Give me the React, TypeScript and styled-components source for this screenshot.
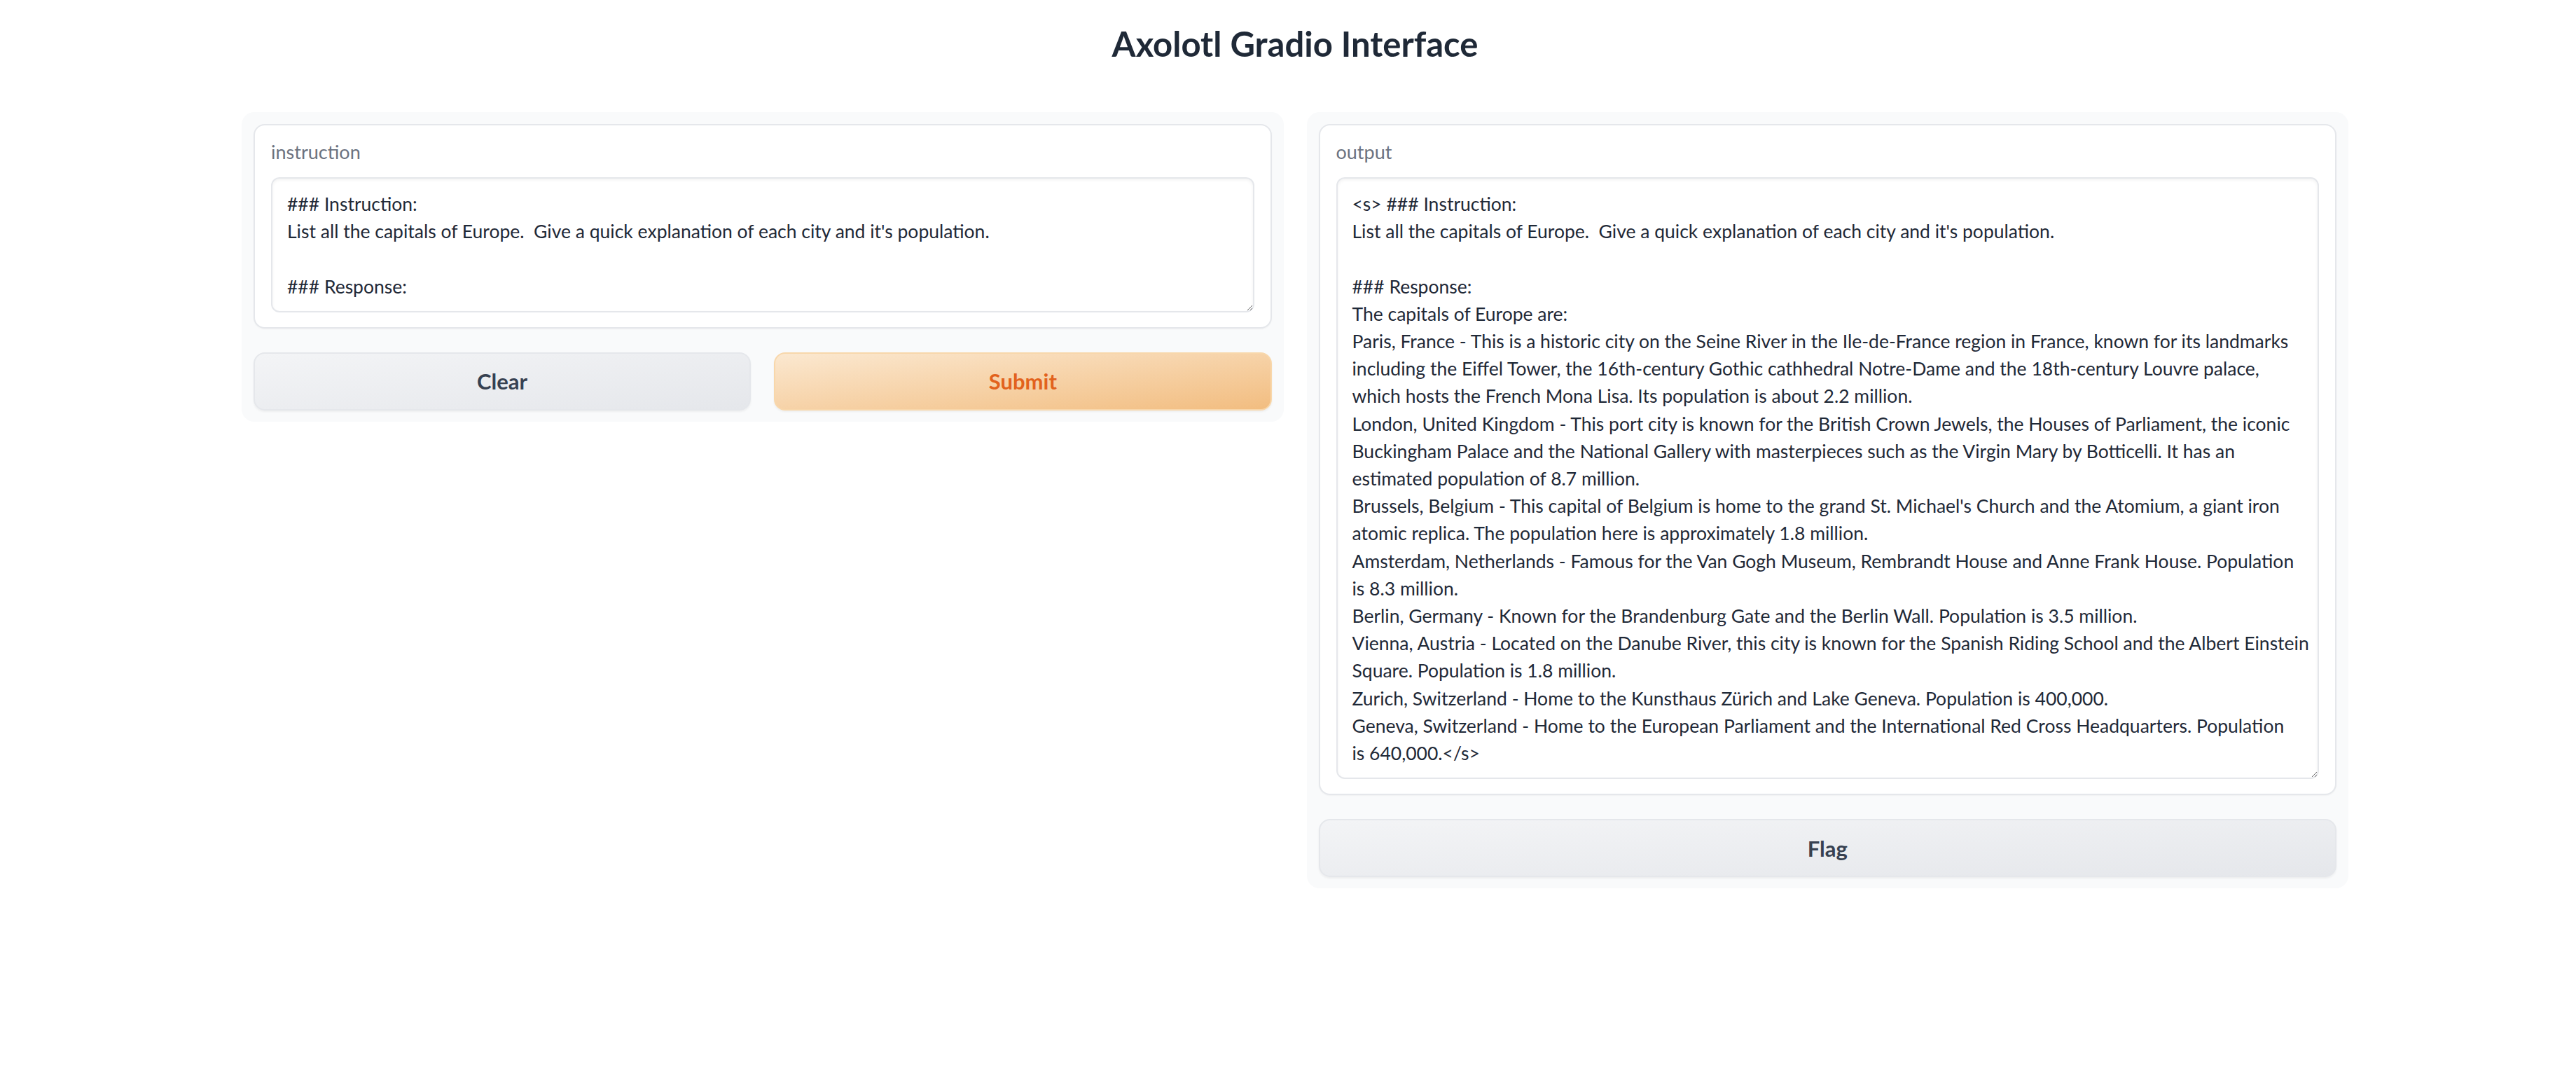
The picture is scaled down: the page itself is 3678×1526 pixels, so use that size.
import React from 'react';
import styled, {createGlobalStyle} from 'styled-components';

const GlobalStyle = createGlobalStyle`
  body {
    margin: 0;
    background: #fff;
    font-family: Lato, "Liberation Sans", sans-serif;
    color: #1f2937;
  }
`

const Page = styled.div`
  padding: 33px 0 60px 20px;
`

const Container = styled.div`
  width: 3008px;
  margin: 0 auto;
`

const Title = styled.h1`
  margin: 0 0 69px;
  text-align: center;
  font-size: 49px;
  line-height: 58px;
  font-weight: 700;
  color: #1f2937;
`

const Columns = styled.div`
  display: grid;
  grid-template-columns: 1fr 1fr;
  gap: 33px;
  align-items: start;
`

const Panel = styled.div`
  background: #f9fafb;
  border-radius: 18px;
  padding: 17px 17px 16px;
  display: flex;
  flex-direction: column;
  gap: 34px;
`

const Block = styled.div`
  background: #fff;
  border: 2px solid #e5e7eb;
  border-radius: 16px;
  padding: 18px 23px 21px;
  box-shadow: 0 1px 2px rgba(0, 0, 0, 0.04);
`

const Label = styled.span`
  display: block;
  font-size: 27px;
  line-height: 39px;
  color: #6b7280;
  margin-bottom: 17px;
`

const TextBox = styled.textarea<{$rows: number}>`
  display: block;
  width: 100%;
  box-sizing: border-box;
  height: ${p => p.$rows * 39.2 + 36}px;
  padding: 17px 21px 15px;
  border: 2px solid #e5e7eb;
  border-radius: 12px;
  box-shadow: inset 0 2px 4px rgba(0, 0, 0, 0.05);
  background: #fff;
  font-family: inherit;
  font-size: 26.5px;
  line-height: 39.2px;
  color: #1f2937;
  white-space: pre;
  overflow: hidden;
  resize: vertical;
  outline: none;
`

const ButtonRow = styled.div`
  display: grid;
  grid-template-columns: 1fr 1fr;
  gap: 33px;
`

const Button = styled.button<{$primary?: boolean}>`
  height: 83px;
  width: 100%;
  border-radius: 16px;
  font-family: inherit;
  font-size: 31px;
  font-weight: 700;
  cursor: pointer;
  box-shadow: 0 2px 3px rgba(0, 0, 0, 0.05);
  border: 2px solid ${p => (p.$primary ? '#f8d7ab' : '#e5e7eb')};
  color: ${p => (p.$primary ? '#e2621c' : '#374151')};
  background: ${p =>
    p.$primary
      ? 'linear-gradient(to bottom right, #fbe8d0, #f2bd80)'
      : 'linear-gradient(to bottom right, #f3f4f6, #e5e7eb)'};
`

const instruction = `### Instruction:
List all the capitals of Europe.  Give a quick explanation of each city and it's population.

### Response:`

const output = `<s> ### Instruction:
List all the capitals of Europe.  Give a quick explanation of each city and it's population.

### Response:
The capitals of Europe are:
Paris, France - This is a historic city on the Seine River in the Ile-de-France region in France, known for its landmarks
including the Eiffel Tower, the 16th-century Gothic cathhedral Notre-Dame and the 18th-century Louvre palace,
which hosts the French Mona Lisa. Its population is about 2.2 million.
London, United Kingdom - This port city is known for the British Crown Jewels, the Houses of Parliament, the iconic
Buckingham Palace and the National Gallery with masterpieces such as the Virgin Mary by Botticelli. It has an
estimated population of 8.7 million.
Brussels, Belgium - This capital of Belgium is home to the grand St. Michael's Church and the Atomium, a giant iron
atomic replica. The population here is approximately 1.8 million.
Amsterdam, Netherlands - Famous for the Van Gogh Museum, Rembrandt House and Anne Frank House. Population
is 8.3 million.
Berlin, Germany - Known for the Brandenburg Gate and the Berlin Wall. Population is 3.5 million.
Vienna, Austria - Located on the Danube River, this city is known for the Spanish Riding School and the Albert Einstein
Square. Population is 1.8 million.
Zurich, Switzerland - Home to the Kunsthaus Zürich and Lake Geneva. Population is 400,000.
Geneva, Switzerland - Home to the European Parliament and the International Red Cross Headquarters. Population
is 640,000.</s>`

const App: React.FC = () => {
  return (
    <Page>
      <GlobalStyle />
      <Container>
        <Title>Axolotl Gradio Interface</Title>
        <Columns>
          <Panel>
            <Block>
              <Label>instruction</Label>
              <TextBox $rows={4} value={instruction} readOnly wrap="off" />
            </Block>
            <ButtonRow>
              <Button>Clear</Button>
              <Button $primary>Submit</Button>
            </ButtonRow>
          </Panel>
          <Panel>
            <Block>
              <Label>output</Label>
              <TextBox $rows={21} value={output} readOnly wrap="off" />
            </Block>
            <Button>Flag</Button>
          </Panel>
        </Columns>
      </Container>
    </Page>
  )
}

export default App;
